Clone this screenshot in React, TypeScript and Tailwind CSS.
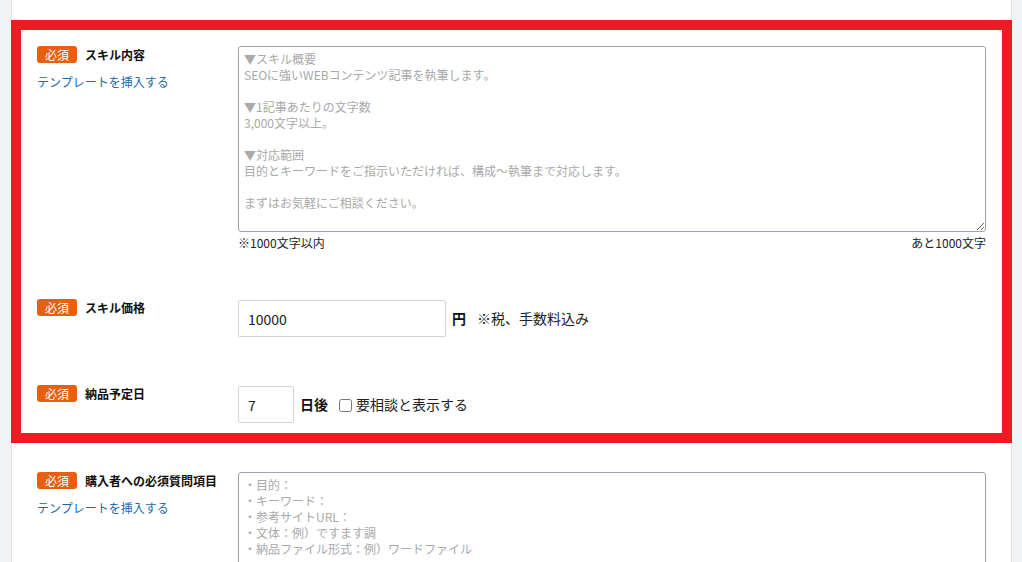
import React from "react";

const FONT = { fontFamily: '"Noto Sans CJK JP", "Noto Sans", "Liberation Sans", sans-serif' };

function Badge() {
  return (
    <span className="inline-flex h-[17px] w-10 items-center justify-center rounded-[3px] bg-[#e8600f] text-[12px] leading-none text-white">
      必須
    </span>
  );
}

function Label({ text, link }: { text: string; link?: boolean }) {
  return (
    <div className="w-[201px] shrink-0">
      <div className="flex items-center gap-2">
        <Badge />
        <span className="text-[12px] font-bold leading-[16px] text-[#111]">{text}</span>
      </div>
      {link && (
        <div className="mt-[11px] text-[12px] leading-[16px] text-[#1e6aa8]">テンプレートを挿入する</div>
      )}
    </div>
  );
}

const skillPlaceholder =
  "▼スキル概要\nSEOに強いWEBコンテンツ記事を執筆します。\n\n▼1記事あたりの文字数\n3,000文字以上。\n\n▼対応範囲\n目的とキーワードをご指示いただければ、構成～執筆まで対応します。\n\nまずはお気軽にご相談ください。";

const questionPlaceholder =
  "・目的：\n・キーワード：\n・参考サイトURL：\n・文体：例）ですます調\n・納品ファイル形式：例）ワードファイル";

export default function App() {
  return (
    <div className="min-h-screen bg-[#f2f3f5] pl-[11px] pr-[10px]" style={FONT}>
      <div className="min-h-[562px] border-x border-[#e2e3e7] bg-white pt-5">
        <div className="-mx-px border-[10px] border-[#ed1c24] px-4 pb-[10px] pt-4">
          <div className="flex">
            <Label text="スキル内容" link />
            <div className="flex-1">
              <textarea
                className="block h-[186px] w-full rounded-[3px] border border-[#a0a4ae] px-[5px] pt-[4px] text-[12px] leading-[16px] outline-none placeholder:text-[#a9a9a9]"
                placeholder={skillPlaceholder}
                style={FONT}
              />
              <div className="mt-[3px] flex justify-between text-[12px] leading-[16px] text-[#222]">
                <span>※1000文字以内</span>
                <span>あと1000文字</span>
              </div>
            </div>
          </div>

          <div className="mt-[49px] flex">
            <div className="-mt-px">
              <Label text="スキル価格" />
            </div>
            <div className="flex items-center">
              <input
                className="h-[37px] w-[208px] rounded-[2px] border border-[#d3d5dc] px-[9px] text-[14px] text-[#222] outline-none"
                defaultValue="10000"
                style={FONT}
              />
              <span className="ml-[6px] text-[14px] font-bold text-[#111]">円</span>
              <span className="ml-[11px] text-[14px] text-[#222]">※税、手数料込み</span>
            </div>
          </div>

          <div className="mt-[49px] flex">
            <div className="-mt-px">
              <Label text="納品予定日" />
            </div>
            <div className="flex items-center">
              <input
                className="h-[37px] w-[56px] rounded-[2px] border border-[#d3d5dc] px-[9px] text-[14px] text-[#222] outline-none"
                defaultValue="7"
                style={FONT}
              />
              <span className="ml-[6px] text-[14px] font-bold text-[#111]">日後</span>
              <input type="checkbox" className="ml-[11px] mt-[2px] h-[13px] w-[13px]" />
              <span className="ml-[4px] text-[14px] text-[#222]">要相談と表示する</span>
            </div>
          </div>
        </div>

        <div className="flex px-[25px] pt-[29px]">
          <Label text="購入者への必須質問項目" link />
          <div className="flex-1">
            <textarea
              className="block h-[186px] w-full rounded-[3px] border border-[#a0a4ae] px-[5px] pt-[4px] text-[12px] leading-[16px] outline-none placeholder:text-[#a9a9a9]"
              placeholder={questionPlaceholder}
              style={FONT}
            />
          </div>
        </div>
      </div>
    </div>
  );
}
